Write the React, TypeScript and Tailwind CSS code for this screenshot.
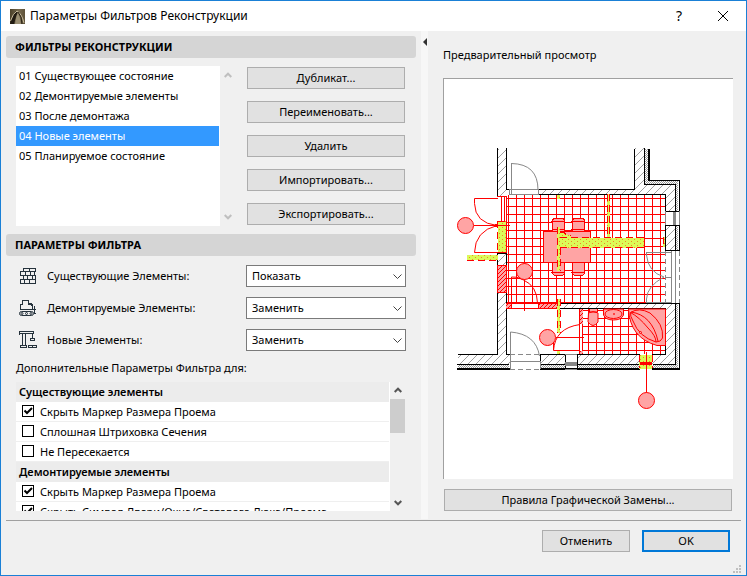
import { useState } from "react";
import type { ReactNode } from "react";

const FILTERS = [
  "01 Существующее состояние",
  "02 Демонтируемые элементы",
  "03 После демонтажа",
  "04 Новые элементы",
  "05 Планируемое состояние",
];

const ACTIONS = ["Дубликат...", "Переименовать...", "Удалить", "Импортировать...", "Экспортировать..."];

const OPTION_GROUPS = [
  {
    title: "Существующие элементы",
    options: [
      { label: "Скрыть Маркер Размера Проема", checked: true },
      { label: "Сплошная Штриховка Сечения", checked: false },
      { label: "Не Пересекается", checked: false },
    ],
  },
  {
    title: "Демонтируемые элементы",
    options: [
      { label: "Скрыть Маркер Размера Проема", checked: true },
      { label: "Скрыть Символ Двери/Окна/Светового Люка/Проема", checked: true },
    ],
  },
];

function Button({ children, primary = false, className = "" }: { children: ReactNode; primary?: boolean; className?: string }) {
  return (
    <button
      type="button"
      className={`flex h-[22px] items-center justify-center bg-[#e1e1e1] ${
        primary ? "border-2 border-[#0078d7]" : "border border-[#adadad]"
      } ${className}`}
    >
      {children}
    </button>
  );
}

function SectionHeader({ children }: { children: ReactNode }) {
  return <h2 className="flex h-[22px] items-center rounded-[3px] bg-[#d5d5d5] px-[9px] font-bold">{children}</h2>;
}

function Chevron({ up = false, className = "" }: { up?: boolean; className?: string }) {
  return (
    <svg viewBox="0 0 8 6" className={`h-[6px] w-2 ${className}`} fill="none" stroke="currentColor" strokeWidth="2" aria-hidden="true">
      <path d={up ? "M0.7 5 4 1.7 7.3 5" : "M0.7 1 4 4.3 7.3 1"} />
    </svg>
  );
}

function AppLogo() {
  return (
    <svg viewBox="0 0 15 15" className="size-[15px]" aria-hidden="true">
      <defs>
        <linearGradient id="logo" x1="0" x2="1" y1="0" y2="0">
          <stop offset="0" stopColor="#4a4029" />
          <stop offset="0.6" stopColor="#75694e" />
          <stop offset="1" stopColor="#5d5138" />
        </linearGradient>
      </defs>
      <rect width="15" height="15" fill="url(#logo)" />
      <path d="M0 15Q2 6 6 2H8Q6 7 4 15Z" fill="#211b12" />
      <path d="M5 15Q6 7 8 4Q10 8 11 15Z" fill="#9a8f74" />
      <path d="M0.500 12Q3 4 7 2Q12 5 14 14" fill="none" stroke="#c9bd9f" strokeWidth="1" />
      <path d="M8 3Q12 7 12 15" fill="none" stroke="#2b2417" strokeWidth="1" />
    </svg>
  );
}

function BricksIcon() {
  return (
    <svg viewBox="0 0 18 18" className="size-[18px]" fill="none" stroke="#25323c" shapeRendering="crispEdges" aria-hidden="true">
      <path d="M4.500 1.500h12v3h-12zM10.500 1.500v3M1.500 4.500h14v4h-14zM6.500 4.500v4M11.500 4.500v4M4.500 8.500h12v4h-12zM8.500 8.500v4M13.500 8.500v4M1.500 12.500h15v4h-15zM5.500 12.500v4M10.500 12.500v4" />
    </svg>
  );
}

function BulldozerIcon() {
  return (
    <svg viewBox="0 0 18 18" className="size-[18px]" fill="none" stroke="#25323c" aria-hidden="true">
      <path d="M1.500 11v-5.500h2v-4h6v4h4v5M1 10.500h13M9.500 4.500h3v2M14 10.500h2.500M15.500 7v7l2 1.500" shapeRendering="crispEdges" />
      <rect x="0.500" y="12.500" width="14" height="4" rx="2" />
      <circle cx="3" cy="14.500" r="1" />
      <circle cx="7.500" cy="14.500" r="1" />
      <circle cx="12" cy="14.500" r="1" />
    </svg>
  );
}

function CraneIcon() {
  return (
    <svg viewBox="0 0 18 18" className="size-[18px]" fill="none" stroke="#25323c" shapeRendering="crispEdges" aria-hidden="true">
      <path d="M0.500 0v4M0.500 0.500h14v2h-14M3.500 2.500v12M6.500 2.500v12M1.500 17v-2.500h6v2.500M0.500 16.500h7M13.500 2.500v5M11.500 7.500h4v2h-4zM9.500 14.500h8v2h-8zM13.500 14.500v2" />
    </svg>
  );
}

const SETTINGS = [
  { id: "existing", label: "Существующие Элементы:", value: "Показать", icon: <BricksIcon /> },
  { id: "demolished", label: "Демонтируемые Элементы:", value: "Заменить", icon: <BulldozerIcon /> },
  { id: "new", label: "Новые Элементы:", value: "Заменить", icon: <CraneIcon /> },
];

function Option({ label, checked }: { label: string; checked: boolean }) {
  return (
    <label className="flex h-5 items-center gap-[6px] border-b border-[#efefef] bg-white pl-[6px]">
      <span className="relative mt-[3px] size-3 shrink-0 self-start">
        <input
          type="checkbox"
          defaultChecked={checked}
          className="peer block size-3 appearance-none border border-black bg-white"
        />
        <svg
          viewBox="0 0 12 12"
          className="pointer-events-none absolute inset-0 hidden size-3 peer-checked:block"
          fill="none"
          stroke="black"
          strokeWidth="2"
          aria-hidden="true"
        >
          <path d="M2.500 5.500 5 8 10 3" />
        </svg>
      </span>
      <span className="whitespace-nowrap">{label}</span>
    </label>
  );
}

function FloorPlan() {
  return (
    <svg viewBox="444 79 289 400" className="block h-auto w-full" fill="none" shapeRendering="crispEdges" role="img" aria-label="План этажа">
      <defs>
        <pattern id="grid" x="508" y="198" width="8" height="8" patternUnits="userSpaceOnUse">
          <path d="M0 .5h8M.5 0v8" stroke="#f00" />
        </pattern>
        <pattern id="hatch" width="8" height="8" patternUnits="userSpaceOnUse">
          <path d="M-1 9 9-1M-1 1 1-1M7 9 9 7" stroke="#a0a0a0" />
        </pattern>
        <pattern id="insulation" width="2" height="2" patternUnits="userSpaceOnUse">
          <path d="M0 0h1v1h-1zM1 1h1v1h-1z" fill="#999" />
        </pattern>
        <pattern id="demolish" width="6" height="4" patternUnits="userSpaceOnUse">
          <path d="M0 0h6v4h-6z" fill="#dcfa58" />
          <path d="M1 1h1v1h-1zM4 3h1v1h-1z" fill="#f08828" />
        </pattern>
        <pattern id="fresh" width="4" height="4" patternUnits="userSpaceOnUse">
          <path d="M0 0h4v4h-4z" fill="#ffa4a4" />
          <path d="M-1 5 5-1M-1 1 1-1" stroke="#f00" />
        </pattern>
      </defs>

      {/* tiled floors */}
      <path d="M506 195h159v108h-159zM583 309h82v45h-82z" fill="url(#grid)" />
      <path d="M506.500 196v107M506 302.500h52M501.500 196v26M504.500 196v26M497 196.500h10M582.500 309v45" stroke="#f00" />

      {/* masonry */}
      <path
        d="M498 149h8v47h-8zM506 190h3v4h-3zM539 190h96v-42h9v37h31v26h-10v-17h-126zM666 226h9v25h-9zM498 293h8v61h4v10h-52v-10h40zM498 253h8v12h-8zM541 355h24v9h-24zM577 355h63v9h-63zM652 355h14v-47h-108v-4h117v60h-23z"
        fill="url(#hatch)"
      />
      <path
        d="M645 149h3v32h30v30h-3v-26h-30zM676 226h2v25h-2zM458 365h51v3h-51zM541 365h24v3h-24zM577 365h63v3h-63zM652 365h24v-61h2v64h-26z"
        fill="url(#insulation)"
      />
      <g stroke="#000">
        <path d="M497.500 148v48M506.500 148v41M506 189.500h3M538.500 194.500v-5h96v-41M538 194.500h127.500v16.500M644.500 148v36.500h31v26" />
        <path d="M665 211.500h14M665 225.500h14M665.500 225v26M675.500 225v26M665 250.500h14M497.500 253v12h9v-12zM497.500 293v61.500h-40M506.500 293v61.500h3M457 364.500h52M557.500 303.500h118v61h-23M557.500 308.500h108v46h-13.500M557.500 303v6M540.500 369v-14.500h24.500v14M540 364.500h25M577.500 369v-14.500h62.500M577 364.500h63" />
        <path d="M648.500 180.500h30.500v31M679.500 225v26M675 303.500h4.500v65h-27.500" />
        <path d="M649 149v32M457 369h53M540 369h100M652 369h28" strokeWidth="2" />
      </g>

      {/* existing doors and windows */}
      <g stroke="#888">
        <path d="M509 189.500h30M509 194.500h30M509.500 189v6M538.500 189v6M511.500 194v-31" />
        <path d="M511.500 163.500Q538 164 538 190" shapeRendering="auto" />
        <path d="M665.500 211v14M679.500 211v14" />
        <path d="M674.500 212v13" strokeWidth="3" />
        <path d="M665.500 251v52M679.500 251v52M510 354.500h30M510 369.500h30" strokeDasharray="5 3" />
        <path d="M671.500 251v52M675.500 251v52M671 252.500h-25v3M646 302.500h26M646.500 303v-4M665 277.500h7" />
        <path d="M646.500 255Q648 272 664 277Q647 286 646.500 299" shapeRendering="auto" />
        <path d="M510.500 332v29h30v8M510.500 361v8" />
        <path d="M510.500 332Q536 334 539.500 356" shapeRendering="auto" />
        <path d="M565 354.500h12M565 369.500h12" />
        <path d="M565 364h12" strokeWidth="4" />
      </g>

      {/* dining table and chairs */}
      <g fill="#ffa4a4" stroke="#f00">
        <path d="M552.500 219.500l2-1h8l2 1v12h-12zM572.500 219.500l2-1h8l2 1v12h-12zM552.500 262.500h12v11l-2 2h-8l-2-2zM572.500 262.500h12v11l-2 2h-8l-2-2z" />
        <path d="M543.500 231.500h47v31h-47z" />
        <path d="M551 221.500h14M571 221.500h14M551 272.500h14M571 272.500h14M553 229.500h12M571 229.500h14" />
      </g>

      {/* demolished partitions */}
      <path d="M498 221h8v32h-8zM467 255h31v5h-31zM557 227h3v5h4l3 3h4v3h73v10h-84v23h-3zM607 194h3v44h-3zM557 299h3v34h-3zM557 351h3v3h-3zM663 237h2v10h-2zM557 195h3v4h-3zM639 355h13v14h-13z" fill="url(#demolish)" />
      <path d="M498 221.500h9M467 260.500h31M497.500 221v32M506.500 221v32M557.500 227v43M560.500 248v23M560 237.500h84M560 247.500h84M560 232.500h4l3 3h4M607.500 194v44M609.500 194v44M557.500 299v34M560.500 299v34M663.500 237v10M639.500 355v13M652.500 355v13" stroke="#f00" strokeDasharray="7 4" />
      <path d="M498 252.500h8" stroke="#f00" />

      {/* new walls */}
      <path d="M498 265h8v28h-8zM506 304h5v4h-5zM538 304h19v4h-19zM580 309h3v15h-3zM580 351h3v3h-3z" fill="url(#fresh)" />
      <path d="M497.500 265.500h9v27h-9zM506 303.500h51M506 308.500h51M511.500 303v6M538.500 303v6M579.500 309v45" stroke="#f00" />
      <path d="M512 304h26v4h-26z" fill="#fff" />

      {/* new openings */}
      <g stroke="#f00" shapeRendering="auto">
        <path d="M498 198.500h-23.500v5Q475 223 497 225.500Q475 231 474.500 252.500h23.500" />
        <path d="M511.500 303v-26q5-1 12 3Q537 286 537.500 303" />
        <path d="M580 324.500Q555 328 553.500 350.500h26M553.500 337v13M556 337.500h28" />
      </g>
      <path d="M474 225.500h36M524.500 280v31M646.500 352v41" stroke="#f00" />
      <path d="M495 225.500h3M640 363.500h12" stroke="#f00" strokeWidth="3" />

      {/* bathroom fixtures */}
      <g fill="#ffa4a4" stroke="#f00" shapeRendering="auto">
        <path d="M589.500 309v3h8v-3M588.500 313Q593 310 598 313V322Q593 329 588 322Z" />
        <path d="M603.500 309v6q2 5 10 5t10-5v-6z" />
        <ellipse cx="613.500" cy="314" rx="8.500" ry="4.500" />
        <circle cx="614" cy="314" r="0.500" />
        <path d="M628.500 309H665.500V345.500H657Q630 338 628.500 309Z" />
        <path d="M630.500 312.500Q639 307 650 313Q664 324 662.500 338Q661 342 656 342Q639 337 633 321Q630 316 630.500 312.500Z" />
        <path d="M631 312Q652 315 658 341M630.500 312.500Q639 317 648 328Q656 336 656 342" fill="none" />
        <circle cx="640.500" cy="332.500" r="1" />
      </g>

      {/* opening markers */}
      <g fill="#ffa4a4" stroke="#f00" shapeRendering="auto">
        <circle cx="465.500" cy="225.500" r="8" />
        <circle cx="524.500" cy="271.500" r="8" />
        <circle cx="547.500" cy="337.500" r="8" />
        <circle cx="646.500" cy="400.500" r="8" />
      </g>
    </svg>
  );
}

export default function App() {
  const [selected, setSelected] = useState(3);

  return (
    <div className="flex min-h-screen flex-col border border-[#1a80d6] bg-[#f0f0f0] font-['Noto_Sans','Open_Sans',sans-serif] text-[11px] leading-4 text-black">
      <header className="flex h-[30px] shrink-0 items-center gap-[5px] bg-white pr-[17px] pl-[9px]">
        <AppLogo />
        <h1 className="flex-1 text-[12px]">Параметры Фильтров Реконструкции</h1>
        <div className="flex items-center gap-[35px]">
          <button type="button" aria-label="Справка" className="text-[14px]">?</button>
          <button type="button" aria-label="Закрыть">
            <svg viewBox="0 0 12 12" className="size-3" stroke="black" aria-hidden="true">
              <path d="M1 1 11 11M11 1 1 11" />
            </svg>
          </button>
        </div>
      </header>

      <main className="flex flex-1">
        <div className="flex w-[420px] shrink-0 flex-col gap-2 px-[5px] pt-[5px] pb-2">
          <section className="flex flex-col gap-2">
            <SectionHeader>ФИЛЬТРЫ РЕКОНСТРУКЦИИ</SectionHeader>
            <div className="flex h-[160px] pr-[11px] pl-[10px]">
              <ul className="w-[204px] bg-white pr-px">
                {FILTERS.map((name, i) => (
                  <li key={name}>
                    <button
                      type="button"
                      aria-pressed={i === selected}
                      onClick={() => setSelected(i)}
                      className={`block h-5 w-full pl-[3px] text-left ${i === selected ? "bg-[#3399ff] text-white" : ""}`}
                    >
                      {name}
                    </button>
                  </li>
                ))}
              </ul>
              <div className="flex w-[15px] flex-col items-center justify-between py-[6px] text-[#bfbfbf]">
                <Chevron up />
                <Chevron />
              </div>
              <div className="flex flex-1 flex-col gap-3 pt-px pl-3">
                {ACTIONS.map((label) => (
                  <Button key={label}>{label}</Button>
                ))}
              </div>
            </div>
          </section>

          <section className="flex flex-col">
            <SectionHeader>ПАРАМЕТРЫ ФИЛЬТРА</SectionHeader>
            <div className="flex flex-col gap-[10px] pt-[9px] pr-[10px] pl-[13px]">
              {SETTINGS.map((s) => (
                <div key={s.id} className="flex h-[22px] items-center">
                  {s.icon}
                  <label htmlFor={s.id} className="flex-1 pl-[10px]">{s.label}</label>
                  <div className="relative w-[160px]">
                    <select id={s.id} defaultValue={s.value} className="block h-[22px] w-full appearance-none border border-[#7a7a7a] bg-white pl-[5px]">
                      <option>Показать</option>
                      <option>Скрыть</option>
                      <option>Заменить</option>
                    </select>
                    <svg viewBox="0 0 9 6" className="pointer-events-none absolute top-[9px] right-1 h-[6px] w-[9px]" fill="none" stroke="#444" aria-hidden="true">
                      <path d="M.5 .5 4.500 4.500 8.500 .5" />
                    </svg>
                  </div>
                </div>
              ))}
            </div>
            <p className="mt-[9px] mb-[6px] pl-[10px]">Дополнительные Параметры Фильтра для:</p>
            <div className="flex h-[129px] pr-[11px] pl-[10px]">
              <div className="flex-1 overflow-hidden bg-white pr-px">
                {OPTION_GROUPS.map((group) => (
                  <section key={group.title}>
                    <h3 className="h-5 bg-[#ececec] pt-[2px] pl-[3px] font-semibold">{group.title}</h3>
                    {group.options.map((o) => (
                      <Option key={o.label} label={o.label} checked={o.checked} />
                    ))}
                  </section>
                ))}
              </div>
              <div className="flex w-[15px] flex-col items-center py-[5px] text-[#555]">
                <Chevron up />
                <div className="mt-[6px] h-[34px] w-full bg-[#cdcdcd]" />
                <Chevron className="mt-auto" />
              </div>
            </div>
          </section>
        </div>

        <button type="button" aria-label="Свернуть просмотр" className="flex w-[7px] shrink-0 items-start justify-center bg-[#f7f7f7] pt-[7px]">
          <svg viewBox="0 0 4 8" className="h-2 w-1" aria-hidden="true">
            <path d="M4 0v8L0 4z" fill="#333" />
          </svg>
        </button>

        <section className="flex flex-1 flex-col pt-4 pr-[13px] pb-2 pl-[15px]">
          <h2>Предварительный просмотр</h2>
          <div className="mt-[15px] border-t border-l border-[#a0a0a0] bg-white">
            <FloorPlan />
          </div>
          <Button className="mx-px mt-auto">Правила Графической Замены...</Button>
        </section>
      </main>

      <footer className="flex flex-col pr-[5px] pl-[5px]">
        <div className="mt-px border-t border-[#a0a0a0]" />
        <div className="flex gap-3 pt-[9px] pr-[11px]">
          <Button className="ml-auto w-[88px]">Отменить</Button>
          <Button primary className="w-[88px]">OK</Button>
        </div>
        <div className="flex h-[23px] items-end justify-end pb-[2px]">
          <svg viewBox="0 0 8 8" className="size-2" fill="#bfbfbf" aria-hidden="true">
            <path d="M6 0h2v2h-2zM6 3h2v2h-2zM3 3h2v2h-2zM6 6h2v2h-2zM3 6h2v2h-2zM0 6h2v2h-2z" />
          </svg>
        </div>
      </footer>
    </div>
  );
}
